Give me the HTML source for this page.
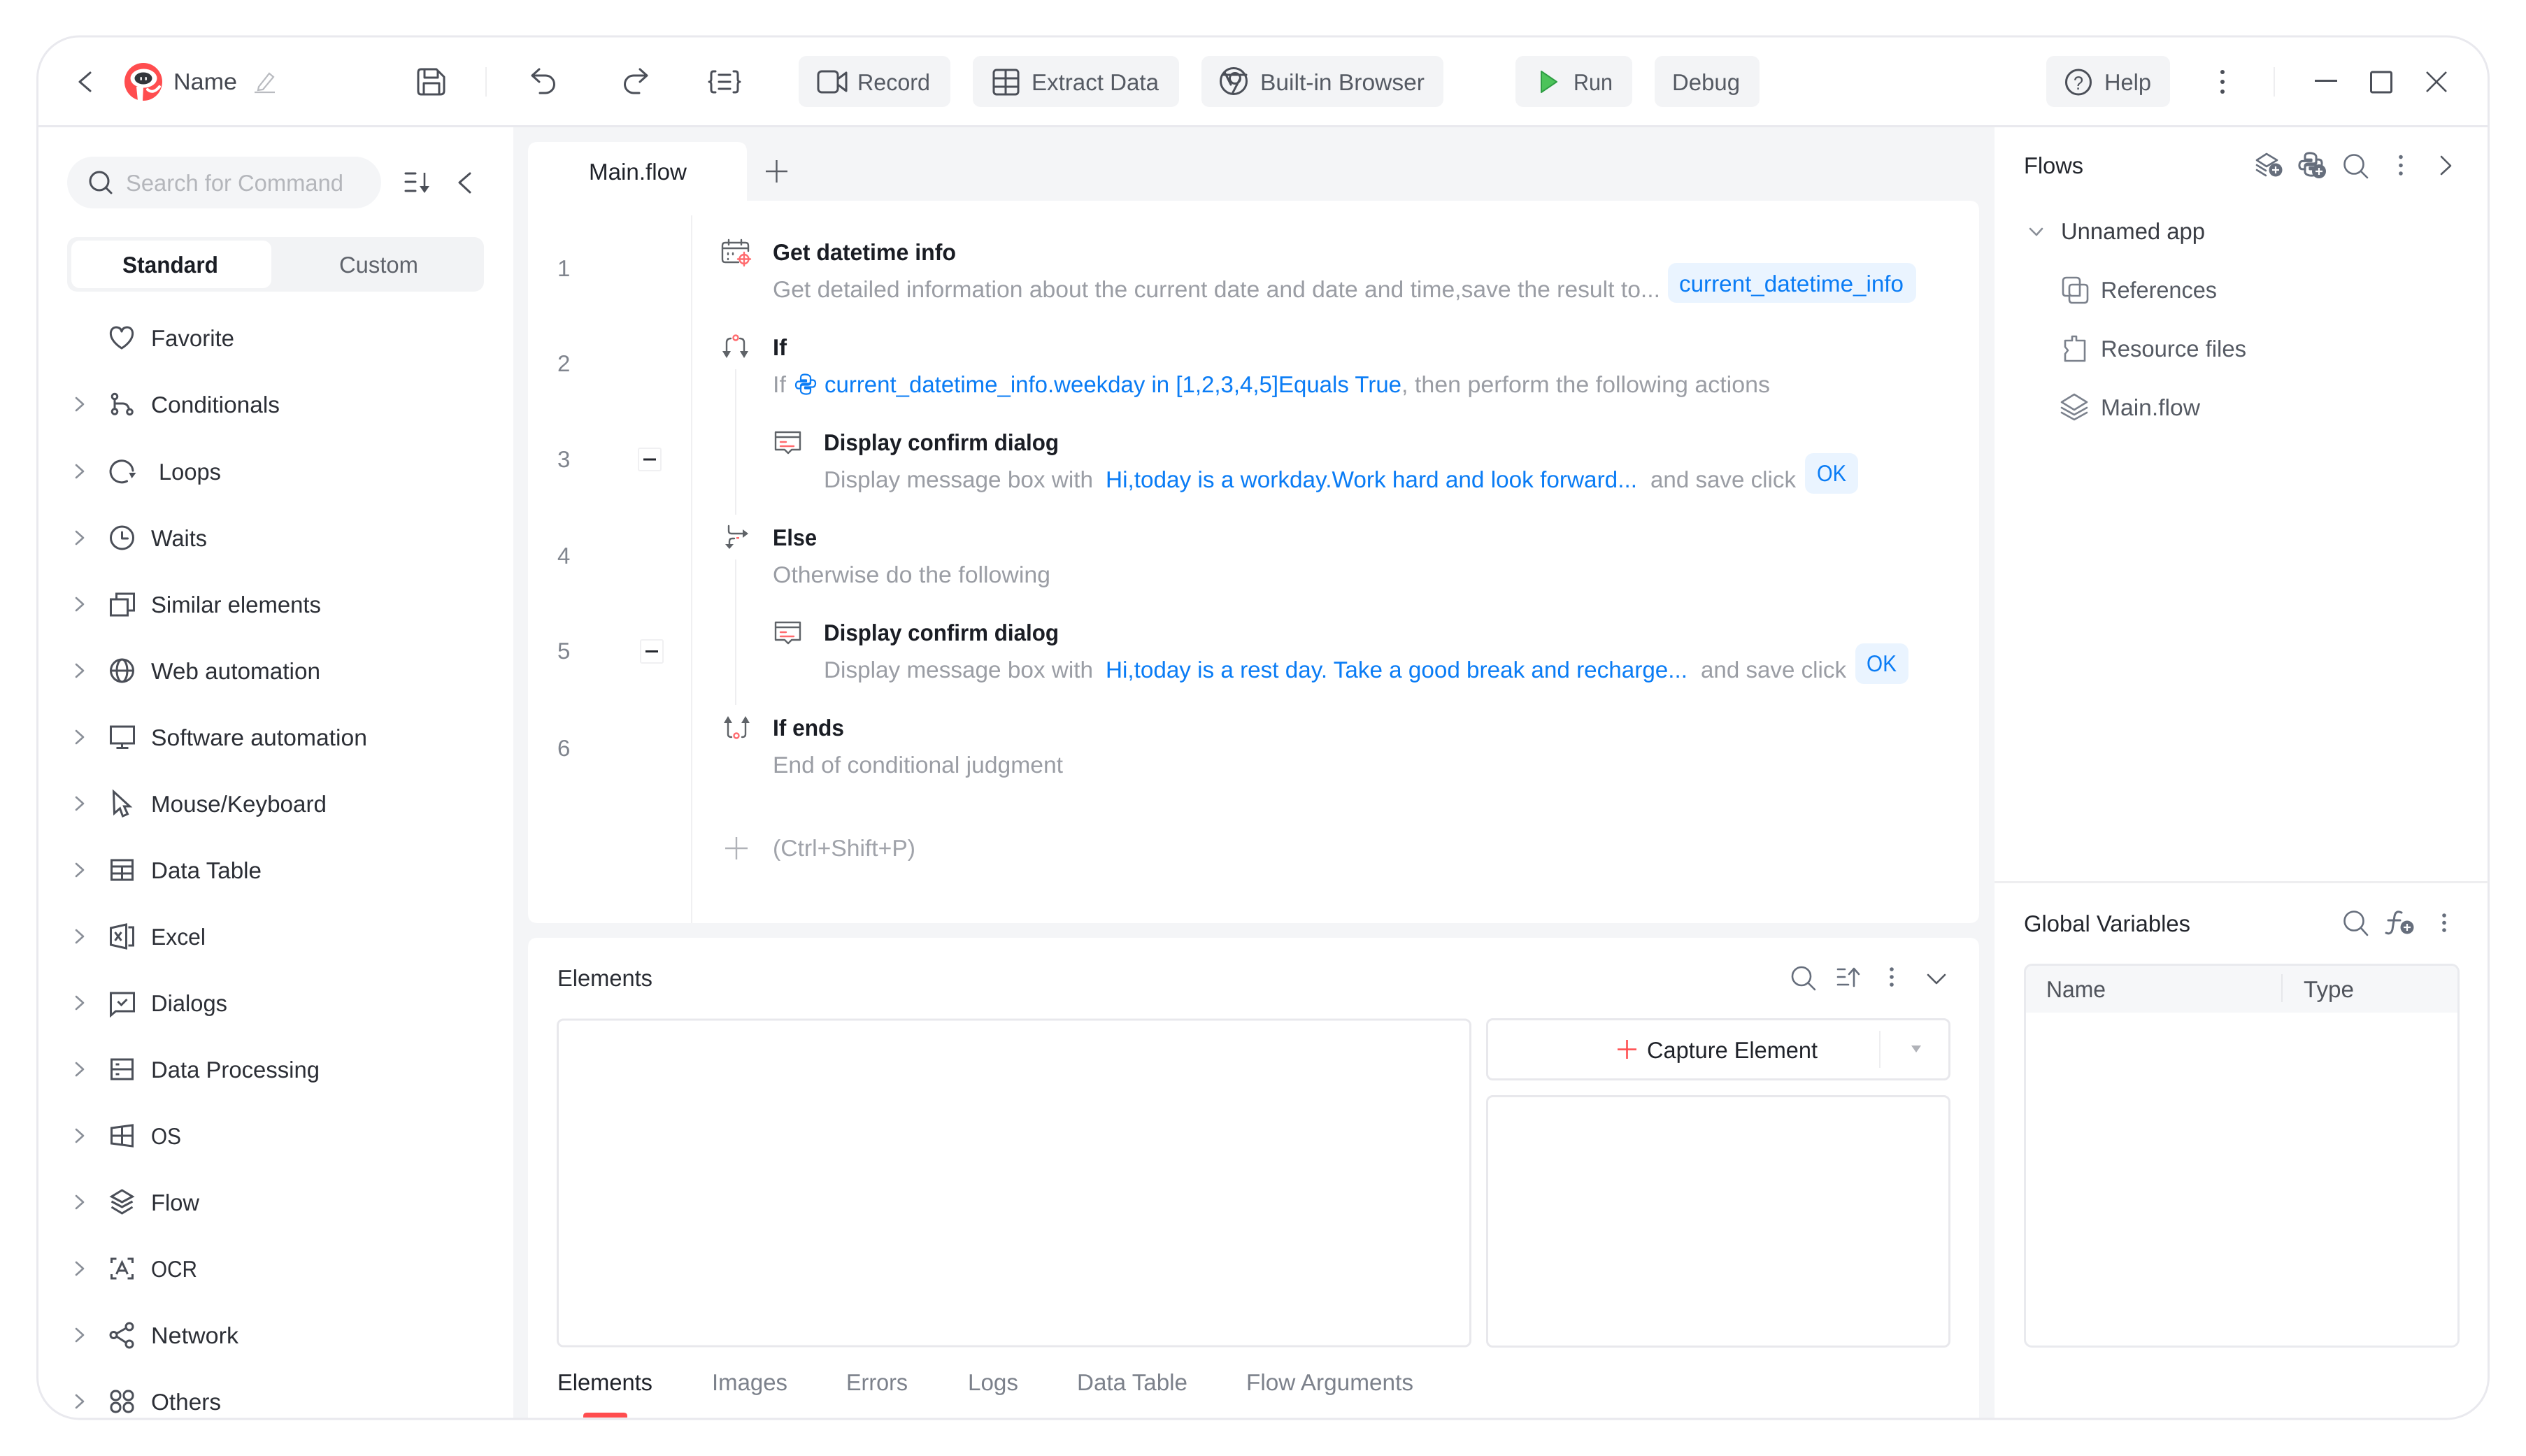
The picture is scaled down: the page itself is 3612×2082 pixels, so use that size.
<!DOCTYPE html>
<html lang="en"><head><meta charset="utf-8"><title>Flow Editor</title>
<style>
html,body{margin:0;padding:0;background:#fff;width:3612px;height:2082px;overflow:hidden}
svg{display:block}
text{font-family:"Liberation Sans",sans-serif;font-size:33px;fill:#2c2f36;text-rendering:geometricPrecision}
.b{font-weight:700;fill:#1a1d24}
.g{fill:#9a9da4}
.l{fill:#0a7cf5}
.m{fill:#555a63}
.n{fill:#80858e}
.s{fill:none;stroke:#4b4f58;stroke-width:3;stroke-linecap:round;stroke-linejoin:round}
.e{fill:none;stroke:#4b4f58;stroke-width:3;stroke-linejoin:miter}
.c{fill:none;stroke:#8a8f98;stroke-width:2.6;stroke-linecap:round;stroke-linejoin:round}
.i{fill:none;stroke:#666e7c;stroke-width:2.6;stroke-linecap:round;stroke-linejoin:round}
.h{fill:none;stroke:#5f6368;stroke-width:2.4;stroke-linecap:round;stroke-linejoin:round}
.r{fill:none;stroke:#ff6b6e;stroke-width:2.4;stroke-linecap:round}
</style></head><body>
<svg xmlns="http://www.w3.org/2000/svg" width="3612" height="2082" viewBox="0 0 3612 2082">
<defs>
<clipPath id="w"><rect x="54" y="53" width="3504" height="1976" rx="60"/></clipPath>
<g id="chev"><path class="c" d="M109,-9 L119,0 L109,9"/></g>
<path id="pysnake" d="M-1,-14 C-7,-14 -7,-11 -7,-9 V-6 H1 V-4 H-10 C-13,-4 -14,-1 -14,1 C-14,4 -13,6 -10,6 H-7 V2 C-7,0 -5,-1 -3,-1 H4 C6,-1 7,-2 7,-4 V-9 C7,-12 4,-14 -1,-14 Z"/>
</defs>
<rect width="3612" height="2082" fill="#fff"/>
<g clip-path="url(#w)">
<rect x="734" y="181" width="2118" height="1860" fill="#f4f5f7"/>
<path d="M755,217 Q755,203 769,203 H1054 Q1068,203 1068,217 V287 H2816 Q2830,287 2830,301 V1306 Q2830,1320 2816,1320 H769 Q755,1320 755,1306 Z" fill="#fff"/>
<path d="M755,1355 Q755,1341 769,1341 H2816 Q2830,1341 2830,1355 V2040 H755 Z" fill="#fff"/>
</g>
<rect x="53.5" y="52" width="3505" height="1977" rx="60" fill="none" stroke="#e9e9ee" stroke-width="3"/>
<rect x="54" y="179" width="3504" height="3" fill="#e9e9ee"/>

<!-- header -->
<path class="s" d="M129,104 L114,117 L129,130"/>
<circle cx="205" cy="117" r="27" fill="#ff4d4f"/>
<ellipse cx="205.500" cy="112" rx="19" ry="13.500" fill="#fff"/>
<path d="M195,124 H205 L204,144 H197 Z" fill="#fff"/>
<ellipse cx="205" cy="112" rx="12.500" ry="8.500" fill="#33363c"/>
<rect x="200.500" y="110" width="2.400" height="5" rx="1.200" fill="#fff"/>
<rect x="207.500" y="110" width="2.400" height="5" rx="1.200" fill="#fff"/>
<path d="M211,128 Q219,135 228,124" fill="none" stroke="#fff" stroke-width="4" stroke-linecap="round"/>
<text x="248" y="128" textLength="91" lengthAdjust="spacingAndGlyphs" class="m" style="fill:#44474f">Name</text>
<path d="M370,124 L385,105 L391,110 L376,128 L369,129 Z M364,132 H393" fill="none" stroke="#b9bbc0" stroke-width="2.200"/>
<path class="s" d="M602,99 H624 L635,110 V130 Q635,135 630,135 H602 Q598,135 598,130 V104 Q598,99 602,99 Z M607,99 V111 H626 V102 M606,135 V119 H628 V135"/>
<rect x="694" y="96" width="2" height="42" fill="#eeeef0"/>
<path class="s" d="M771,99 L761,108 L771,117 M761,108 H780 A12.500,12.500 0 0 1 780,133 H772"/>
<path class="s" d="M915,99 L925,108 L915,117 M925,108 H906 A12.500,12.500 0 0 0 906,133 H914"/>
<path class="s" d="M1023,102 H1020 Q1017,102 1017,106 V113 Q1017,117 1014,117 Q1017,117 1017,121 V128 Q1017,132 1020,132 H1023 M1049,102 H1052 Q1055,102 1055,106 V113 Q1055,117 1058,117 Q1055,117 1055,121 V128 Q1055,132 1052,132 H1049 M1028,107 H1044 M1028,117 H1044 M1028,127 H1044"/>

<rect x="1142" y="80" width="217" height="73" rx="11" fill="#f3f4f6"/>
<rect x="1391" y="80" width="295" height="73" rx="11" fill="#f3f4f6"/>
<rect x="1718" y="80" width="346" height="73" rx="11" fill="#f3f4f6"/>
<rect x="2167" y="80" width="167" height="73" rx="11" fill="#f3f4f6"/>
<rect x="2366" y="80" width="150" height="73" rx="11" fill="#f3f4f6"/>
<rect x="2926" y="80" width="177" height="73" rx="11" fill="#f3f4f6"/>
<rect class="s" x="1170" y="102" width="28" height="30" rx="5"/>
<path class="s" d="M1198,113 L1210,104 V130 L1198,121"/>
<text x="1226" y="129" textLength="104" lengthAdjust="spacingAndGlyphs" class="m">Record</text>
<rect class="s" x="1421" y="100" width="35" height="35" rx="4"/>
<path class="s" d="M1421,112 H1456 M1421,124 H1456 M1438,100 V135"/>
<text x="1475" y="129" textLength="182" lengthAdjust="spacingAndGlyphs" class="m">Extract Data</text>
<circle class="s" cx="1764" cy="116" r="18.500"/>
<circle class="s" cx="1766" cy="112" r="7.500"/>
<path class="s" d="M1751,103 L1760,121 M1748,107 H1782 M1773,113 L1762,134"/>
<text x="1802" y="129" textLength="235" lengthAdjust="spacingAndGlyphs" class="m">Built-in Browser</text>
<path d="M2204,102 L2226,117 L2204,132 Z" fill="#4cc35a" stroke="#2f9e44" stroke-width="2" stroke-linejoin="round"/>
<text x="2250" y="129" textLength="56" lengthAdjust="spacingAndGlyphs" class="m">Run</text>
<text x="2391" y="129" textLength="97" lengthAdjust="spacingAndGlyphs" class="m">Debug</text>
<circle class="s" cx="2972" cy="117.500" r="17.500"/>
<text x="2965" y="128" textLength="14" lengthAdjust="spacingAndGlyphs" style="font-size:27px;fill:#4b4f58">?</text>
<text x="3009" y="129" textLength="67" lengthAdjust="spacingAndGlyphs" class="m">Help</text>
<circle cx="3178" cy="103" r="3" fill="#4b4f58"/><circle cx="3178" cy="117" r="3" fill="#4b4f58"/><circle cx="3178" cy="131" r="3" fill="#4b4f58"/>
<rect x="3251" y="96" width="2" height="42" fill="#eeeef0"/>
<rect x="3310" y="114" width="32" height="3" fill="#4b4f58"/>
<rect x="3390.500" y="103" width="29" height="29" rx="2" fill="none" stroke="#4b4f58" stroke-width="3"/>
<path d="M3470,103 L3498,131 M3498,103 L3470,131" fill="none" stroke="#4b4f58" stroke-width="2.600"/>

<!-- left sidebar -->
<rect x="96" y="224" width="449" height="74" rx="37" fill="#f4f5f7"/>
<circle cx="142" cy="259" r="13" fill="none" stroke="#4b4f58" stroke-width="3"/>
<path class="s" d="M151,268 L159,276"/>
<text x="180" y="273" textLength="311" lengthAdjust="spacingAndGlyphs" style="fill:#b4b6bb">Search for Command</text>
<path class="s" d="M580,248 H594 M580,260 H594 M580,273 H594"/>
<path d="M607,247 V270" fill="none" stroke="#4b4f58" stroke-width="2.600"/>
<path d="M600,266 H614 L607,276 Z" fill="#4b4f58"/>
<path class="s" d="M672,248 L657,261 L672,275"/>
<rect x="96" y="339" width="596" height="78" rx="14" fill="#f2f3f5"/>
<rect x="102" y="344" width="286" height="68" rx="12" fill="#fff"/>
<text x="175" y="390" textLength="137" lengthAdjust="spacingAndGlyphs" class="b">Standard</text>
<text x="485" y="390" textLength="113" lengthAdjust="spacingAndGlyphs" style="fill:#5f636b">Custom</text>

<text x="216" y="495" textLength="119" lengthAdjust="spacingAndGlyphs">Favorite</text>
<text x="216" y="590" textLength="184" lengthAdjust="spacingAndGlyphs">Conditionals</text>
<text x="227" y="686" textLength="89" lengthAdjust="spacingAndGlyphs">Loops</text>
<text x="216" y="781" textLength="80" lengthAdjust="spacingAndGlyphs">Waits</text>
<text x="216" y="876" textLength="243" lengthAdjust="spacingAndGlyphs">Similar elements</text>
<text x="216" y="971" textLength="242" lengthAdjust="spacingAndGlyphs">Web automation</text>
<text x="216" y="1066" textLength="309" lengthAdjust="spacingAndGlyphs">Software automation</text>
<text x="216" y="1161" textLength="251" lengthAdjust="spacingAndGlyphs">Mouse/Keyboard</text>
<text x="216" y="1256" textLength="158" lengthAdjust="spacingAndGlyphs">Data Table</text>
<text x="216" y="1351" textLength="78" lengthAdjust="spacingAndGlyphs">Excel</text>
<text x="216" y="1446" textLength="109" lengthAdjust="spacingAndGlyphs">Dialogs</text>
<text x="216" y="1541" textLength="241" lengthAdjust="spacingAndGlyphs">Data Processing</text>
<text x="216" y="1636" textLength="43" lengthAdjust="spacingAndGlyphs">OS</text>
<text x="216" y="1731" textLength="69" lengthAdjust="spacingAndGlyphs">Flow</text>
<text x="216" y="1826" textLength="66" lengthAdjust="spacingAndGlyphs">OCR</text>
<text x="216" y="1921" textLength="125" lengthAdjust="spacingAndGlyphs">Network</text>
<text x="216" y="2016" textLength="100" lengthAdjust="spacingAndGlyphs">Others</text>

<use href="#chev" y="578"/><use href="#chev" y="674"/><use href="#chev" y="769"/><use href="#chev" y="864"/><use href="#chev" y="959"/><use href="#chev" y="1054"/><use href="#chev" y="1149"/><use href="#chev" y="1244"/><use href="#chev" y="1339"/><use href="#chev" y="1434"/><use href="#chev" y="1529"/><use href="#chev" y="1624"/><use href="#chev" y="1719"/><use href="#chev" y="1814"/><use href="#chev" y="1909"/><use href="#chev" y="2004"/>

<path class="s" transform="translate(174,483)" d="M0,15 C-22,1 -17,-15 -8,-15 C-4,-15 -1,-13 0,-9 C1,-13 4,-15 8,-15 C17,-15 22,1 0,15Z"/>
<g class="s" transform="translate(174.500,578)"><circle cx="-10.500" cy="-11" r="3.800"/><circle cx="-10.500" cy="10.500" r="3.800"/><circle cx="11" cy="11" r="3.800"/><path d="M-10.500,-7 V6.500 M-10.500,-1 H1 Q8,-1 10,7"/></g>
<g transform="translate(174.500,674)"><path class="s" d="M15.500,-1 A16,15.500 0 1 0 7,14"/><path d="M10,2 H20 L14,10 Z" fill="#4b4f58"/></g>
<g class="s" transform="translate(174.500,769)"><circle r="16"/><path d="M0,-8 V1 H8"/></g>
<g class="e" transform="translate(174.500,864)"><rect x="-16" y="-7" width="24" height="23"/><path d="M-8,-7 V-15 H17 V9 H8"/></g>
<g class="e" transform="translate(174.500,959)"><circle r="16"/><ellipse rx="7.500" ry="16"/><path d="M-16,0 H16"/></g>
<g class="e" transform="translate(174.500,1054)"><rect x="-16" y="-15" width="33" height="24"/><path d="M0,9 V15 M-8,15.500 H9"/></g>
<path class="e" transform="translate(174.500,1150)" d="M-12,-18 L11,3 L3,3 L8,14 L1,17 L-3,6 L-11,13 Z"/>
<g class="e" transform="translate(174.500,1244)"><rect x="-15" y="-14" width="30" height="28"/><path d="M-15,-5 H15 M-15,5 H15 M0,-5 V14"/></g>
<g class="e" transform="translate(174.500,1339)"><path d="M-16,-12 L6,-17 V17 L-16,12 Z M9,-13 H16 V13 H9 M-10,-6 L-1,6 M-1,-6 L-10,6"/></g>
<g class="e" transform="translate(174.500,1434)"><path d="M-16,-14 H17 V12 H-9 L-16,18 Z M-6,-2 L-1,3 L7,-5"/></g>
<g class="e" transform="translate(174.500,1529)"><rect x="-15" y="-14" width="30" height="28"/><path d="M-15,0 H15 M-9,-7 H-4 M-9,7 H-4"/></g>
<g class="e" transform="translate(174.500,1624)"><path d="M-15,-11 L15,-15 V15 L-15,11 Z M0,-13 V13 M-15,0 H15"/></g>
<g class="e" transform="translate(174.500,1719)"><path d="M0,-17 L15,-8 L0,0 L-15,-8 Z M-15,-1 L0,7 L15,-1 M-15,7 L0,16 L15,7"/></g>
<g class="e" transform="translate(174.500,1814)"><path d="M-15,-8 V-14 H-8 M8,-14 H15 V-8 M-15,8 V14 H-8 M8,14 H15 V8 M-8,8 L0,-9 L8,8 M-5,3 H5"/></g>
<g class="s" transform="translate(174.500,1909)"><circle cx="-12" cy="0" r="4.500"/><circle cx="10.500" cy="-12" r="5"/><circle cx="10.500" cy="13" r="5"/><path d="M-8,-2 L6,-10 M-8,2 L6,11"/></g>
<g class="s" transform="translate(174.500,2004)"><rect x="-15.500" y="-15" width="13" height="13" rx="6"/><rect x="2.500" y="-15" width="13" height="13" rx="6"/><rect x="-15.500" y="2" width="13" height="13" rx="6"/><rect x="2.500" y="2" width="13" height="13" rx="6"/></g>

<!-- flow -->
<text x="842" y="257" textLength="140" lengthAdjust="spacingAndGlyphs" style="fill:#1f2229">Main.flow</text>
<path d="M1095,245 H1126 M1110.500,229 V261" fill="none" stroke="#5a5e66" stroke-width="2.400"/>
<rect x="988" y="308" width="2" height="1012" fill="#f0f0f2"/>
<text x="797" y="395" class="n">1</text>
<text x="797" y="531" class="n">2</text>
<text x="797" y="668" class="n">3</text>
<text x="797" y="806" class="n">4</text>
<text x="797" y="942" class="n">5</text>
<text x="797" y="1081" class="n">6</text>
<rect x="913" y="641" width="32" height="32" rx="2" fill="#fff" stroke="#f0f0f2" stroke-width="2"/>
<rect x="920" y="655.500" width="18" height="3" fill="#23262d"/>
<rect x="916" y="915" width="32" height="33" rx="2" fill="#fff" stroke="#f0f0f2" stroke-width="2"/>
<rect x="923" y="930" width="18" height="3" fill="#23262d"/>
<rect x="1051" y="528" width="2" height="208" fill="#eeeef0"/>
<rect x="1051" y="800" width="2" height="208" fill="#eeeef0"/>

<path class="h" d="M1056,375 H1037 Q1033,375 1033,371 V351 Q1033,347 1037,347 H1066 Q1070,347 1070,351 V359 M1033,355 H1070 M1042,343 V350 M1060,343 V350 M1041,362 V364 M1048,362 V364 M1041,370 V371"/>
<path class="r" d="M1064,361 V380 M1055,370.500 H1073"/><circle class="r" cx="1064" cy="370.500" r="6.500"/>
<text x="1105" y="372" textLength="262" lengthAdjust="spacingAndGlyphs" class="b">Get datetime info</text>
<text x="1105" y="425" textLength="1269" lengthAdjust="spacingAndGlyphs" class="g">Get detailed information about the current date and date and time,save the result to...</text>
<rect x="2385" y="376" width="355" height="57" rx="12" fill="#eaf4ff"/>
<text x="2401" y="417" textLength="321" lengthAdjust="spacingAndGlyphs" class="l">current_datetime_info</text>

<path class="h" d="M1039,503 V490 Q1039,484 1045,484 M1064,503 V490 Q1064,484 1058,484"/>
<path d="M1033,502 H1045 L1039,512 Z M1058,502 H1070 L1064,512 Z" fill="#5f6368"/>
<circle class="r" cx="1052" cy="483" r="3.500"/>
<text x="1105" y="508" textLength="20" lengthAdjust="spacingAndGlyphs" class="b">If</text>
<text x="1105" y="561" textLength="19" lengthAdjust="spacingAndGlyphs" class="g">If</text>
<g fill="none" stroke="#0a7cf5" stroke-width="2.200" stroke-linecap="round" stroke-linejoin="round" transform="translate(1152,549.500)"><use href="#pysnake"/><use href="#pysnake" transform="rotate(180)"/></g>
<text x="1179" y="561" textLength="825" lengthAdjust="spacingAndGlyphs" class="l">current_datetime_info.weekday in [1,2,3,4,5]Equals True</text>
<text x="2004" y="561" textLength="527" lengthAdjust="spacingAndGlyphs" class="g">, then perform the following actions</text>

<path class="h" d="M1109,618 H1144 V643 H1132 L1127,648 L1122,643 H1109 Z M1109,625 H1144"/>
<path class="r" d="M1116,632 H1124 M1116,638 H1135"/>
<text x="1178" y="644" textLength="336" lengthAdjust="spacingAndGlyphs" class="b">Display confirm dialog</text>
<text x="1178" y="697" textLength="385" lengthAdjust="spacingAndGlyphs" class="g">Display message box with</text>
<text x="1581" y="697" textLength="760" lengthAdjust="spacingAndGlyphs" class="l">Hi,today is a workday.Work hard and look forward...</text>
<text x="2360" y="697" textLength="208" lengthAdjust="spacingAndGlyphs" class="g">and save click</text>
<rect x="2581" y="648" width="76" height="58" rx="12" fill="#eaf4ff"/>
<text x="2598" y="688" textLength="42" lengthAdjust="spacingAndGlyphs" class="l">OK</text>

<path class="h" d="M1042,752 V759 Q1042,763 1046,763 H1064 M1050,770 H1047 Q1043,770 1043,774 V779"/>
<path d="M1062,757 L1070,763 L1062,769 Z M1037,778 H1049 L1043,785 Z" fill="#5f6368"/>
<rect x="1053" y="768" width="4" height="2.500" fill="#ff6b6e"/>
<text x="1105" y="780" textLength="63" lengthAdjust="spacingAndGlyphs" class="b">Else</text>
<text x="1105" y="833" textLength="397" lengthAdjust="spacingAndGlyphs" class="g">Otherwise do the following</text>

<path class="h" d="M1109,890 H1144 V915 H1132 L1127,920 L1122,915 H1109 Z M1109,897 H1144"/>
<path class="r" d="M1116,904 H1124 M1116,910 H1135"/>
<text x="1178" y="916" textLength="336" lengthAdjust="spacingAndGlyphs" class="b">Display confirm dialog</text>
<text x="1178" y="969" textLength="385" lengthAdjust="spacingAndGlyphs" class="g">Display message box with</text>
<text x="1581" y="969" textLength="832" lengthAdjust="spacingAndGlyphs" class="l">Hi,today is a rest day. Take a good break and recharge...</text>
<text x="2432" y="969" textLength="208" lengthAdjust="spacingAndGlyphs" class="g">and save click</text>
<rect x="2653" y="920" width="76" height="58" rx="12" fill="#eaf4ff"/>
<text x="2669" y="960" textLength="43" lengthAdjust="spacingAndGlyphs" class="l">OK</text>

<path class="h" d="M1041,1032 V1050 Q1041,1054 1046,1054 M1066,1032 V1050 Q1066,1054 1061,1054"/>
<path d="M1035,1034 H1047 L1041,1024 Z M1060,1034 H1072 L1066,1024 Z" fill="#5f6368"/>
<circle class="r" cx="1053" cy="1052" r="3.500"/>
<text x="1105" y="1052" textLength="102" lengthAdjust="spacingAndGlyphs" class="b">If ends</text>
<text x="1105" y="1105" textLength="415" lengthAdjust="spacingAndGlyphs" class="g">End of conditional judgment</text>
<path d="M1037,1213 H1069 M1053,1197 V1229" fill="none" stroke="#b0b2b8" stroke-width="2.400"/>
<text x="1105" y="1224" textLength="204" lengthAdjust="spacingAndGlyphs" style="fill:#a0a3aa">(Ctrl+Shift+P)</text>

<!-- elements -->
<text x="797" y="1410" textLength="136" lengthAdjust="spacingAndGlyphs" style="fill:#2a2d34">Elements</text>
<circle class="i" cx="2576" cy="1396" r="13"/><path class="i" d="M2586,1406 L2595,1415"/>
<path class="i" d="M2628,1386 H2638 M2628,1397 H2638 M2628,1408 H2643 M2651,1410 V1386 M2644,1393 L2651,1385 L2658,1393"/>
<circle cx="2705" cy="1386" r="2.800" fill="#666e7c"/><circle cx="2705" cy="1397" r="2.800" fill="#666e7c"/><circle cx="2705" cy="1408" r="2.800" fill="#666e7c"/>
<path class="c" style="stroke:#555a63" d="M2757,1394 L2769,1406 L2781,1394"/>
<rect x="797.500" y="1458" width="1305" height="467" rx="8" fill="#fff" stroke="#e8e8ec" stroke-width="3"/>
<rect x="2126.500" y="1457.500" width="661" height="86" rx="8" fill="#fff" stroke="#e8e8ec" stroke-width="3"/>
<rect x="2126.500" y="1567.500" width="661" height="358" rx="8" fill="#fff" stroke="#e8e8ec" stroke-width="3"/>
<path d="M2313,1500.500 H2340 M2326.500,1487 V1514" fill="none" stroke="#ff4d4f" stroke-width="2.600"/>
<text x="2355" y="1513" textLength="244" lengthAdjust="spacingAndGlyphs" style="fill:#1f2229">Capture Element</text>
<rect x="2687" y="1474" width="2" height="53" fill="#eeeef0"/>
<path d="M2733,1495 H2747 L2740,1505 Z" fill="#b0b2b8"/>
<text x="797" y="1988" textLength="136" lengthAdjust="spacingAndGlyphs" style="fill:#1f2229">Elements</text>
<text x="1018" y="1988" textLength="108" lengthAdjust="spacingAndGlyphs" style="fill:#7c818b">Images</text>
<text x="1210" y="1988" textLength="88" lengthAdjust="spacingAndGlyphs" style="fill:#7c818b">Errors</text>
<text x="1384" y="1988" textLength="72" lengthAdjust="spacingAndGlyphs" style="fill:#7c818b">Logs</text>
<text x="1540" y="1988" textLength="158" lengthAdjust="spacingAndGlyphs" style="fill:#7c818b">Data Table</text>
<text x="1782" y="1988" textLength="239" lengthAdjust="spacingAndGlyphs" style="fill:#7c818b">Flow Arguments</text>
<path d="M834,2027 V2025 Q834,2020 839,2020 H892 Q897,2020 897,2025 V2027 Z" fill="#ff4d4f"/>

<!-- right panel -->
<text x="2894" y="248" textLength="85" lengthAdjust="spacingAndGlyphs" style="fill:#23262d">Flows</text>
<path class="i" d="M3241,220 L3256,229 L3241,238 L3227,229 Z M3227,236 L3240,244 M3227,243 L3240,251"/>
<circle cx="3254" cy="243" r="9.500" fill="#666e7c"/><path d="M3249,243 H3259 M3254,238 V248" stroke="#fff" stroke-width="2.200"/>
<g class="i" transform="translate(3304,235) scale(1.150)"><use href="#pysnake"/><use href="#pysnake" transform="rotate(180)"/></g>
<circle cx="3316" cy="245" r="10" fill="#666e7c"/><path d="M3311,245 H3321 M3316,240 V250" stroke="#fff" stroke-width="2.200"/>
<circle class="i" cx="3366" cy="235" r="13.500"/><path class="i" d="M3376,245 L3385,254"/>
<circle cx="3433" cy="224.500" r="2.800" fill="#666e7c"/><circle cx="3433" cy="236.500" r="2.800" fill="#666e7c"/><circle cx="3433" cy="248" r="2.800" fill="#666e7c"/>
<path class="c" style="stroke:#555a63" d="M3491,224 L3504,237 L3491,249"/>
<path class="c" d="M2903,327 L2912,336 L2920,327"/>
<text x="2947" y="342" textLength="206" lengthAdjust="spacingAndGlyphs" style="fill:#3a3d44">Unnamed app</text>
<path class="i" style="stroke:#7b818c" d="M2959,423 H2954 Q2950,423 2950,419 V402 Q2950,397 2955,397 H2969 Q2974,397 2974,402 V423 H2963 Q2959,423 2959,419 V411 Q2959,407 2963,407 H2980 Q2985,407 2985,411 V428 Q2985,433 2980,433 H2963 Q2959,433 2959,428 V423"/>
<text x="3004" y="426" textLength="166" lengthAdjust="spacingAndGlyphs" class="m">References</text>
<path class="i" style="stroke:#7b818c" d="M2953,487 H2963 V481 H2969 V487 H2981 V516 H2953 V506 L2957,501 L2953,496 Z"/>
<text x="3004" y="510" textLength="208" lengthAdjust="spacingAndGlyphs" class="m">Resource files</text>
<path class="i" style="stroke:#7b818c" d="M2966,564 L2984,575 L2966,586 L2948,575 Z M2948,583 L2966,593 L2984,583 M2948,590 L2966,600 L2984,590"/>
<text x="3004" y="594" textLength="142" lengthAdjust="spacingAndGlyphs" class="m">Main.flow</text>

<rect x="2852" y="1260" width="706" height="3" fill="#eeeef0"/>
<text x="2894" y="1332" textLength="238" lengthAdjust="spacingAndGlyphs" style="fill:#23262d">Global Variables</text>
<circle class="i" cx="3366" cy="1317" r="13.500"/><path class="i" d="M3376,1327 L3385,1337"/>
<path class="i" style="stroke-width:3" d="M3434,1305 Q3426,1301 3424,1310 L3421,1329 Q3419,1337 3412,1334 M3415,1316 H3432"/>
<circle cx="3442" cy="1326" r="9.500" fill="#666e7c"/><path d="M3437,1326 H3447 M3442,1321 V1331" stroke="#fff" stroke-width="2.200"/>
<circle cx="3495" cy="1309" r="2.800" fill="#666e7c"/><circle cx="3495" cy="1319.500" r="2.800" fill="#666e7c"/><circle cx="3495" cy="1330" r="2.800" fill="#666e7c"/>
<path d="M2905,1379.500 H3505 Q3515,1379.500 3515,1390 V1448 H2895.500 V1390 Q2895.500,1379.500 2905,1379.500 Z" fill="#f6f7f9"/>
<rect x="2895.500" y="1379.500" width="620" height="546" rx="10" fill="none" stroke="#e9eaee" stroke-width="3"/>
<rect x="3262" y="1393" width="2" height="40" fill="#e6e7ea"/>
<text x="2926" y="1426" textLength="85" lengthAdjust="spacingAndGlyphs" style="fill:#50545c">Name</text>
<text x="3294" y="1426" textLength="72" lengthAdjust="spacingAndGlyphs" style="fill:#50545c">Type</text>
</svg>
</body></html>
